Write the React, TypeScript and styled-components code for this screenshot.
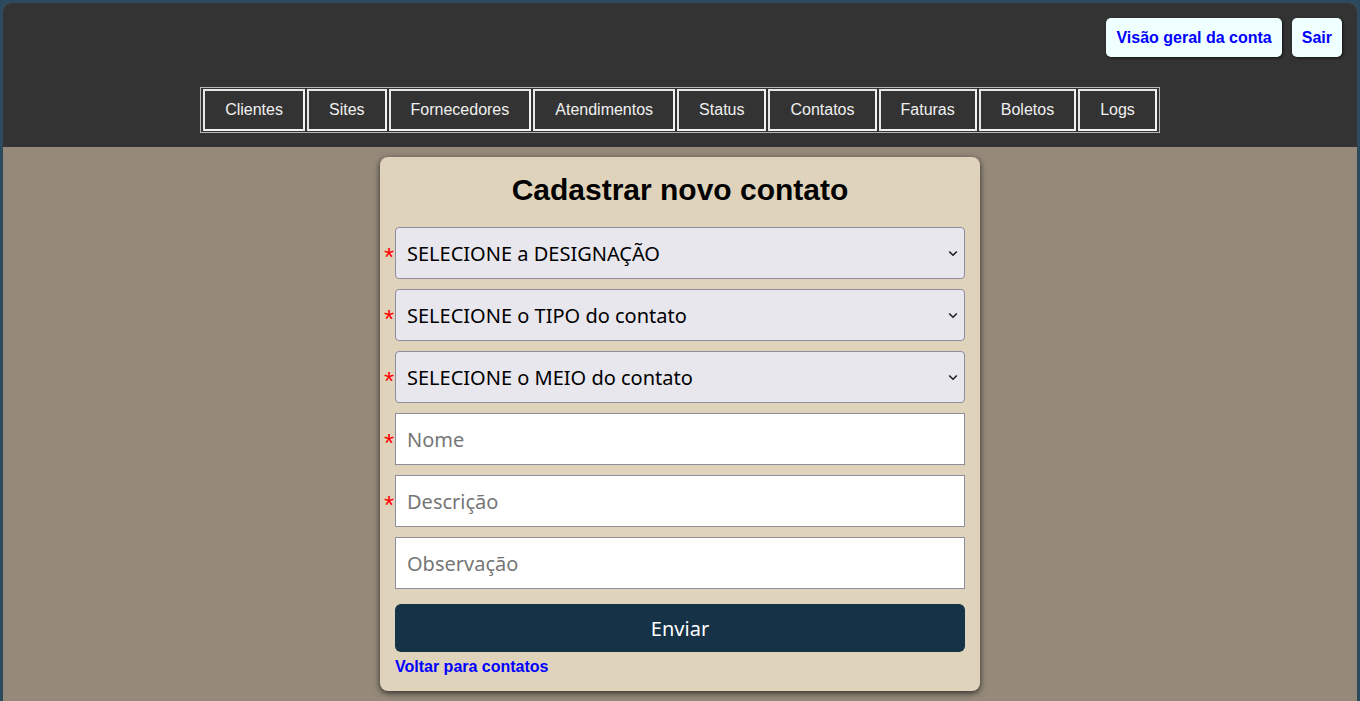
import styled, { createGlobalStyle } from "styled-components";

const GlobalStyle = createGlobalStyle`
    html, body {
        margin: 0;
        padding: 0;
        background-color: #2b4a5e;
        font-family: "Liberation Sans", Arial, sans-serif;
    }
    body {
        padding: 3px 3px 0 3px;
        height: 701px;
        box-sizing: border-box;
        overflow: hidden;
    }
`;

const Frame = styled.div`
    border-radius: 8px 8px 0 0;
    overflow: hidden;
    height: 698px;
    display: flex;
    flex-direction: column;
    background-color: #958a7a;
`;

const Header = styled.header`
    background-color: #333333;
    height: 144px;
    display: flex;
    flex-direction: column;
    align-items: center;
`;

const TopBar = styled.div`
    align-self: stretch;
    display: flex;
    justify-content: flex-end;
    gap: 10px;
    padding: 15px 15px 0 0;
`;

const AccountButton = styled.a`
    display: block;
    background-color: #f0ffff;
    color: #0000ff;
    font-weight: bold;
    font-size: 16px;
    line-height: 19px;
    padding: 10px 10px;
    border-radius: 5px;
    box-shadow: 1px 1px 3px rgba(0, 0, 0, 0.6);
    text-decoration: none;
`;

const NavTable = styled.table`
    margin-top: 30px;
    border: 1px solid #b8b8b8;
    border-spacing: 2px 1px;
    border-collapse: separate;
`;

const NavCell = styled.td`
    border: 2px solid #f2f2f2;
    border-top-color: #e6e6e6;
    border-left-color: #e6e6e6;
    padding: 0 20px;
    height: 38px;
    color: #f0f0f0;
    font-size: 16px;
    text-align: center;
    white-space: nowrap;
`;

const Main = styled.main`
    flex: 1;
    display: flex;
    justify-content: center;
    padding-top: 10px;
`;

const Card = styled.form`
    width: 600px;
    box-sizing: border-box;
    background-color: #dfd3bb;
    border-radius: 8px;
    box-shadow: 0 2px 6px rgba(0, 0, 0, 0.7);
    padding: 16px 15px 15px 15px;
    align-self: flex-start;
    display: flex;
    flex-direction: column;
`;

const Title = styled.h1`
    margin: 0 0 20px 0;
    text-align: center;
    font-size: 30px;
    line-height: 34px;
    font-weight: bold;
    color: #000;
`;

const Field = styled.div`
    position: relative;
    display: flex;
    align-items: center;
    margin-left: -15px;
    margin-bottom: 10px;
`;

const Star = styled.span<{ $show: boolean }>`
    width: 15px;
    flex: none;
    text-align: right;
    padding-right: 1px;
    box-sizing: border-box;
    color: #ff0000;
    font-size: 26px;
    line-height: 26px;
    padding-top: 8px;
    visibility: ${(p) => (p.$show ? "visible" : "hidden")};
`;

const Select = styled.select`
    flex: 1;
    height: 52px;
    box-sizing: border-box;
    appearance: none;
    background-color: #e8e7ee;
    border: 1px solid #8d8d9c;
    border-radius: 4px;
    padding: 0 11px;
    font-family: "Noto Sans", sans-serif;
    font-size: 20px;
    color: #000;
`;

const Chevron = styled.svg`
    position: absolute;
    right: 7px;
    top: 23px;
    width: 10px;
    height: 7px;
    pointer-events: none;
`;

const Input = styled.input`
    flex: 1;
    height: 52px;
    box-sizing: border-box;
    background-color: #ffffff;
    border: 1px solid #8d8d9c;
    border-radius: 0;
    padding: 0 11px;
    font-family: "Noto Sans", sans-serif;
    font-size: 20px;
    color: #000;
    &::placeholder {
        color: #767676;
    }
`;

const SubmitButton = styled.button`
    margin-top: 5px;
    height: 48px;
    border: none;
    border-radius: 6px;
    background-color: #163246;
    color: #ffffff;
    font-family: "Noto Sans", sans-serif;
    font-size: 20px;
`;

const BackLink = styled.a`
    margin-top: 6px;
    color: #0000ff;
    font-weight: bold;
    font-size: 16px;
    line-height: 18px;
    text-decoration: none;
`;

const navItems = ["Clientes", "Sites", "Fornecedores", "Atendimentos", "Status", "Contatos", "Faturas", "Boletos", "Logs"];

const selects = ["SELECIONE a DESIGNAÇÃO", "SELECIONE o TIPO do contato", "SELECIONE o MEIO do contato"];

const inputs = [
    { placeholder: "Nome", required: true },
    { placeholder: "Descrição", required: true },
    { placeholder: "Observação", required: false },
];

export default function App() {
    return (
        <>
            <GlobalStyle />
            <Frame>
                <Header>
                    <TopBar>
                        <AccountButton href="#">Visão geral da conta</AccountButton>
                        <AccountButton href="#">Sair</AccountButton>
                    </TopBar>
                    <NavTable>
                        <tbody>
                            <tr>
                                {navItems.map((n) => (
                                    <NavCell key={n}>{n}</NavCell>
                                ))}
                            </tr>
                        </tbody>
                    </NavTable>
                </Header>
                <Main>
                    <Card onSubmit={(e) => e.preventDefault()}>
                        <Title>Cadastrar novo contato</Title>
                        {selects.map((s) => (
                            <Field key={s}>
                                <Star $show={true}>*</Star>
                                <Select defaultValue="">
                                    <option value="">{s}</option>
                                </Select>
                                <Chevron viewBox="0 0 10 7">
                                    <path d="M1.2 1.5 L5 5.2 L8.8 1.5" fill="none" stroke="#1f1f1f" strokeWidth="1.6" />
                                </Chevron>
                            </Field>
                        ))}
                        {inputs.map((i) => (
                            <Field key={i.placeholder}>
                                <Star $show={i.required}>*</Star>
                                <Input placeholder={i.placeholder} />
                            </Field>
                        ))}
                        <SubmitButton type="submit">Enviar</SubmitButton>
                        <BackLink href="#">Voltar para contatos</BackLink>
                    </Card>
                </Main>
            </Frame>
        </>
    );
}
